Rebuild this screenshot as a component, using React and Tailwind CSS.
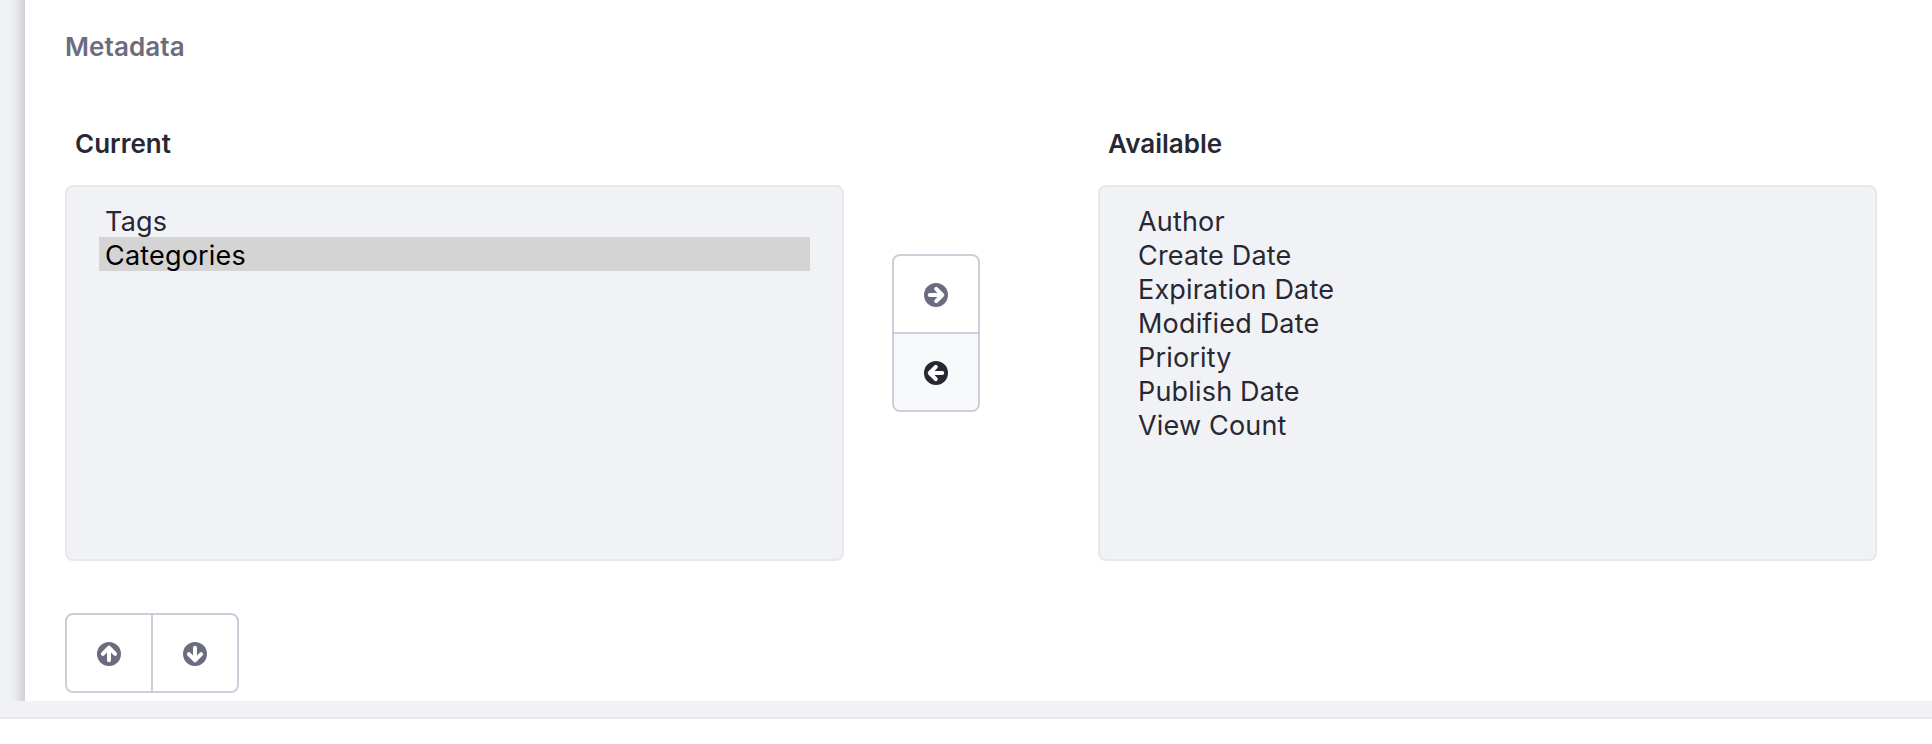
const ROTATION = {
  right: 'rotate-0',
  down: 'rotate-90',
  left: 'rotate-180',
  up: '-rotate-90',
};

function ArrowCircle({ direction }) {
  return (
    <svg viewBox="0 0 24 24" className={`size-6 ${ROTATION[direction]}`} aria-hidden="true">
      <circle cx="12" cy="12" r="12" fill="currentColor" />
      <path
        d="M5.8 12H17M12.2 5.9L18.3 12L12.2 18.1"
        fill="none"
        stroke="#fff"
        strokeWidth="4"
        strokeLinecap="round"
        strokeLinejoin="round"
      />
    </svg>
  );
}

function ListBox({ title, options, selected }) {
  return (
    <section className="w-[779px]">
      <h3 className="mb-[23px] ml-[10px] h-9 text-[26px] leading-9 font-semibold text-[#272833]">{title}</h3>
      <ul className="h-[376px] rounded-lg border-2 border-[#e7e7ed] bg-[#f1f2f5] px-8 py-4 text-[27px] leading-[38px] tracking-[0.18px]">
        {options.map((option) => (
          <li
            key={option}
            className={
              option === selected
                ? 'h-[34px] bg-[#d4d4d4] pl-[6px] text-black'
                : 'h-[34px] pl-[6px] text-[#272833]'
            }
          >
            {option}
          </li>
        ))}
      </ul>
    </section>
  );
}

export default function App() {
  return (
    <div className="flex h-[744px] w-[1932px] flex-col overflow-hidden bg-white font-['Inter',sans-serif]">
      <div className="flex h-[719px] flex-col border-b-2 border-[#e7e7ed] bg-[#f1f2f5]">
        <div className="flex h-[701px]">
          <div className="w-[25px] shrink-0 bg-linear-to-r from-[#f1f2f5] from-30% via-[#e9eaed] via-65% to-[#cfd0d3]" />
          <main className="flex-1 bg-white pl-10">
            <h2 className="mt-[29px] h-9 text-[26px] leading-9 font-semibold tracking-[0.1px] text-[#6b6c7e]">Metadata</h2>
            <div className="mt-[61px] flex">
              <ListBox title="Current" options={['Tags', 'Categories']} selected="Categories" />
              <div className="mt-32 mr-[118px] ml-12 flex h-[158px] w-[88px] flex-col overflow-hidden rounded-lg border-2 border-[#cdced9]">
                <button className="flex h-[78px] items-center justify-center border-b-2 border-[#cdced9] pt-px text-[#6b6c7e]">
                  <ArrowCircle direction="right" />
                </button>
                <button className="flex flex-1 items-center justify-center bg-[#f7f8f9] pt-px text-[#272833]">
                  <ArrowCircle direction="left" />
                </button>
              </div>
              <ListBox
                title="Available"
                options={[
                  'Author',
                  'Create Date',
                  'Expiration Date',
                  'Modified Date',
                  'Priority',
                  'Publish Date',
                  'View Count',
                ]}
              />
            </div>
            <div className="mt-[52px] flex h-20 w-[174px] overflow-hidden rounded-lg border-2 border-[#cdced9] text-[#6b6c7e]">
              <button className="flex w-[86px] items-center justify-center border-r-2 border-[#cdced9] pt-[2px]">
                <ArrowCircle direction="up" />
              </button>
              <button className="flex flex-1 items-center justify-center pt-[2px]">
                <ArrowCircle direction="down" />
              </button>
            </div>
          </main>
        </div>
      </div>
    </div>
  );
}
